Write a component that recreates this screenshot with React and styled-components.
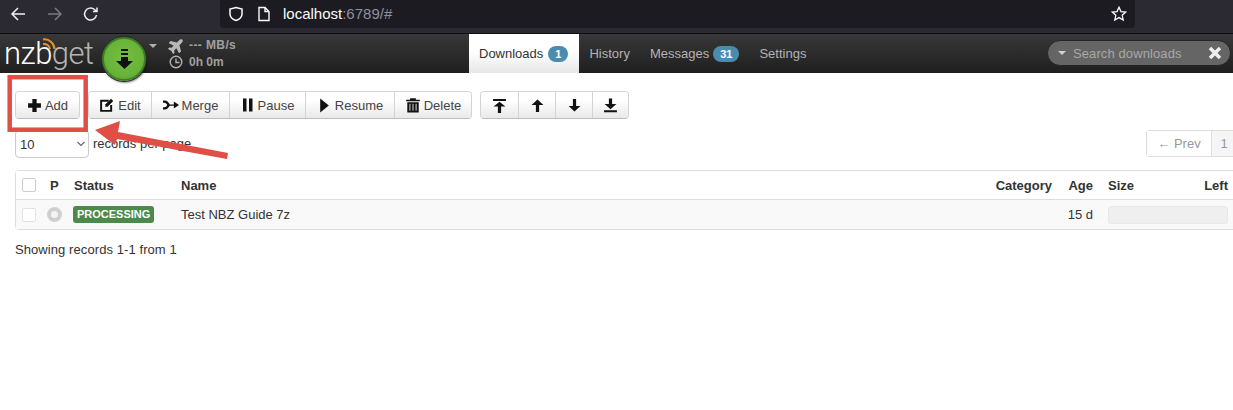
import React from "react";
import styled, { createGlobalStyle } from "styled-components";
import { FaPlane } from "react-icons/fa";

const GlobalStyle = createGlobalStyle`
  html, body { margin: 0; padding: 0; background: #fff; overflow: hidden; }
  body { font-family: "Liberation Sans", Arial, sans-serif; font-size: 13px; color: #333; }
`;

const Page = styled.div`
  position: relative;
  width: 1233px;
  height: 410px;
  overflow: hidden;
`;

/* browser chrome */
const BrowserBar = styled.div`
  height: 33px;
  background: #2b2a33;
  border-bottom: 1px solid #0c0c0d;
  display: flex;
  color: #f0f0f4;
`;
const NavButtons = styled.div`
  width: 220px;
  display: flex;
  align-items: flex-start;
  padding: 6px 0 0 10px;
  gap: 18px;
  box-sizing: border-box;
`;
const UrlBar = styled.div`
  width: 915px;
  height: 28px;
  background: #1c1b22;
  border-radius: 0 0 4px 4px;
  display: flex;
  align-items: center;
  padding: 0 8px 1px 8px;
  box-sizing: border-box;
  font-size: 15px;
`;
const UrlHost = styled.span`
  color: #fbfbfe;
  margin-left: 12px;
`;
const UrlRest = styled.span`
  color: #8f8f9d;
`;
const UrlSpacer = styled.div`
  flex: 1;
`;

/* app navbar */
const Navbar = styled.div`
  height: 39px;
  background: linear-gradient(#383838, #1f1f1f);
  display: flex;
  position: relative;
`;
const Logo = styled.div`
  position: relative;
  width: 98px;
  flex: none;
  padding-left: 4px;
  box-sizing: border-box;
  font-family: Roboto, "Liberation Sans", sans-serif;
  font-weight: 300;
  font-size: 31px;
  line-height: 39px;
  letter-spacing: -0.5px;
  color: #fff;
  white-space: nowrap;
`;
const LogoGrey = styled.span`
  color: #b4b4b4;
`;
const LogoWaves = styled.svg`
  position: absolute;
  left: 41px;
  top: 3px;
`;
const PlayButton = styled.div`
  position: relative;
  z-index: 3;
  width: 44px;
  height: 44px;
  margin: 3px 0 0 4px;
  border-radius: 50%;
  flex: none;
  background: radial-gradient(circle at 50% 45%, #74bd42 0%, #68b438 62%, #4f9a2a 100%);
  border: 2px solid #3d7d26;
  box-shadow: 0 0 0 1px #2b2b2b, 1px 2px 2px rgba(0, 0, 0, 0.45);
  box-sizing: border-box;
  display: flex;
  align-items: center;
  justify-content: center;
`;
const Caret = styled.div`
  width: 0;
  height: 0;
  margin: 10px 0 0 3px;
  border-left: 4px solid transparent;
  border-right: 4px solid transparent;
  border-top: 4px solid #b0b0b0;
  flex: none;
`;
const StatusBox = styled.div`
  margin-left: 11px;
  width: 301px;
  padding-top: 4px;
  display: flex;
  flex-direction: column;
  gap: 3px;
  font-size: 12px;
  font-weight: bold;
  color: #a0a0a0;
  flex: none;
`;
const StatusRow = styled.div`
  display: flex;
  align-items: center;
  gap: 4px;
  height: 14px;
  letter-spacing: ${(props) => props.$spread || 0}px;
`;
const PlaneIcon = styled(FaPlane)`
  width: 17px;
  height: 15px;
  color: #b8b8b8;
  transform: rotate(-45deg);
`;
const Tabs = styled.div`
  display: flex;
  align-items: stretch;
  font-size: 13px;
  flex: 1;
`;
const Tab = styled.div`
  display: flex;
  align-items: center;
  gap: ${(props) => (props.$active ? 5 : 4)}px;
  padding: 0 ${(props) => (props.$active ? 11 : 10)}px 0 10px;
  color: ${(props) => (props.$active ? "#333" : "#b3b3b3")};
  background: ${(props) =>
    props.$active ? "linear-gradient(#fff, #fff 45%, #e6e6e6)" : "none"};
`;
const Badge = styled.span`
  background: #4a8cb0;
  color: #fff;
  font-size: 11px;
  font-weight: bold;
  border-radius: 9px;
  padding: 2px 7px;
  line-height: 12px;
`;
const Search = styled.div`
  position: absolute;
  right: 2px;
  top: 6px;
  width: 184px;
  height: 26px;
  box-sizing: border-box;
  border-radius: 13px;
  background: #656565;
  border: 1px solid #252525;
  display: flex;
  align-items: center;
  padding: 0 8px 0 10px;
  color: #a8a8a8;
  font-size: 13px;
  letter-spacing: 0.1px;
`;
const SearchCaret = styled.div`
  width: 0;
  height: 0;
  margin-right: 7px;
  border-left: 4px solid transparent;
  border-right: 4px solid transparent;
  border-top: 4px solid #d0d0d0;
`;
const SearchClear = styled.span`
  margin-left: auto;
  display: flex;
`;

/* main content */
const Content = styled.div`
  padding: 18px 0 0 15px;
`;
const Toolbar = styled.div`
  display: flex;
  height: 28px;
  gap: 8px;
`;
const BtnGroup = styled.div`
  display: flex;
  border: 1px solid #d4d4d4;
  border-bottom-color: #bdbdbd;
  border-radius: 4px;
  overflow: hidden;
  box-sizing: border-box;
`;
const Btn = styled.div`
  display: flex;
  align-items: center;
  justify-content: center;
  gap: 3px;
  width: ${(props) => props.$w}px;
  box-sizing: border-box;
  background: linear-gradient(#fff, #fff 30%, #e9e9e9);
  color: #444;
  font-size: 13px;
  & + & {
    border-left: 1px solid #d4d4d4;
  }
`;
const ListControls = styled.div`
  display: flex;
  margin-top: 11px;
  height: 28px;
  align-items: flex-start;
`;
const PageSelect = styled.div`
  width: 74px;
  height: 28px;
  box-sizing: border-box;
  border: 1px solid #ccc;
  border-radius: 4px;
  display: flex;
  align-items: center;
  justify-content: space-between;
  padding: 0 3px 0 4px;
  font-size: 13px;
`;
const PerPage = styled.span`
  margin: 6px 0 0 4px;
  font-size: 13px;
`;
const Pager = styled.div`
  margin: 0 -3px 0 auto;
  display: flex;
  height: 27px;
  border: 1px solid #ddd;
  border-right: none;
  border-radius: 4px 0 0 4px;
  box-sizing: border-box;
  color: #999;
  font-size: 13px;
`;
const PagerItem = styled.div`
  display: flex;
  align-items: center;
  justify-content: center;
  width: ${(props) => props.$w}px;
  background: ${(props) => (props.$current ? "#f5f5f5" : "#fff")};
  border-left: ${(props) => (props.$current ? "1px solid #ddd" : "none")};
`;
const Table = styled.div`
  margin: 12px -6px 0 0;
  border: 1px solid #ddd;
  border-radius: 4px 0 0 4px;
  font-size: 13px;
`;
const Row = styled.div`
  display: grid;
  grid-template-columns: 34px 24px 107px 1fr 72px 41px 135px;
  align-items: center;
  height: ${(props) => props.$h}px;
  padding-right: 10px;
  background: ${(props) => (props.$odd ? "#f9f9f9" : "#fff")};
  border-top: ${(props) => (props.$odd ? "1px solid #ddd" : "none")};
  font-weight: ${(props) => (props.$head ? "bold" : "normal")};
`;
const Check = styled.div`
  width: 14px;
  height: 14px;
  margin-left: 6px;
  box-sizing: border-box;
  border: 1px solid ${(props) => (props.$dim ? "#e2e2e2" : "#ccc")};
  border-radius: 2px;
  background: #fff;
`;
const PriorityDot = styled.div`
  width: 15px;
  height: 15px;
  margin-left: -3px;
  box-sizing: border-box;
  border: 4px solid #cfcfcf;
  border-radius: 50%;
  background: #f4f4f4;
`;
const StatusLabel = styled.span`
  display: inline-block;
  margin-left: -1px;
  background: #4b8a4a;
  color: #fff;
  font-size: 11px;
  font-weight: bold;
  line-height: 12px;
  padding: 2px 4px 3px;
  border-radius: 3px;
`;
const RightCell = styled.div`
  text-align: right;
`;
const SizeHead = styled.div`
  display: flex;
  justify-content: space-between;
  padding-left: 15px;
`;
const ProgressCell = styled.div`
  padding-left: 15px;
`;
const Progress = styled.div`
  height: 18px;
  border-radius: 3px;
  background: #efefef;
  border: 1px solid #e9e9e9;
  box-sizing: border-box;
`;
const Footer = styled.div`
  margin-top: 12px;
  font-size: 13px;
  letter-spacing: 0.08px;
`;
const Annotation = styled.svg`
  position: absolute;
  left: 0;
  top: 0;
  pointer-events: none;
`;

const ChromeIcon = ({ d, opacity = 1 }) => (
  <svg width="18" height="18" viewBox="0 0 18 18" fill="none" stroke="#f0f0f4" strokeWidth="1.5" opacity={opacity}>
    <path d={d} />
  </svg>
);

const Glyph = ({ children, size = 14 }) => (
  <svg width={size} height={size} viewBox="0 0 14 14" fill="#111" style={{ flex: "none" }}>
    {children}
  </svg>
);

const App = () => {
  return (
    <Page>
      <GlobalStyle />
      <BrowserBar>
        <NavButtons>
          <ChromeIcon d="M15 8H2M8 2L2 8l6 6" />
          <ChromeIcon d="M2 8h13M9 2l6 6-6 6" opacity={0.4} />
          <ChromeIcon d="M14.5 9a6 6 0 1 1-2-5.5L15 5.5M15 1.5v4h-4" />
        </NavButtons>
        <UrlBar>
          <svg width="16" height="16" viewBox="0 0 16 16" fill="none" stroke="#fbfbfe" strokeWidth="1.5">
            <path d="M8 1.5l6 1.5v5c0 3.500-3 5.500-6 6.500-3-1-6-3-6-6.500V3z" />
          </svg>
          <svg width="14" height="16" viewBox="0 0 14 16" fill="none" stroke="#fbfbfe" strokeWidth="1.4" style={{ marginLeft: 13 }}>
            <path d="M2 1.500h6l4 4v9H2zM8 1.500v4h4" />
          </svg>
          <UrlHost>localhost</UrlHost>
          <UrlRest>:6789/#</UrlRest>
          <UrlSpacer />
          <svg width="16" height="16" viewBox="0 0 16 16" fill="none" stroke="#fbfbfe" strokeWidth="1.3">
            <path d="M8 1.200l2 4.400 4.700.5-3.500 3.200 1 4.700L8 11.600 3.800 14l1-4.700L1.300 6.100 6 5.600z" />
          </svg>
        </UrlBar>
      </BrowserBar>

      <Navbar>
        <Logo>
          nzb<LogoGrey>get</LogoGrey>
          <LogoWaves width="16" height="14" viewBox="0 0 16 14" fill="none" stroke="#e8922e" strokeWidth="2">
            <path d="M2 7a6 6 0 0 1 7 5M2 2.500a10 10 0 0 1 11.500 9.500" />
          </LogoWaves>
        </Logo>
        <PlayButton>
          <svg width="17" height="22" viewBox="0 0 17 22" fill="#111">
            <rect x="5" y="1" width="7" height="2" />
            <rect x="5" y="5" width="7" height="2" />
            <path d="M5 9h7v4h5l-8.500 8L0 13h5z" />
          </svg>
        </PlayButton>
        <Caret />
        <StatusBox>
          <StatusRow $spread={0.4}>
            <PlaneIcon />
            <span>--- MB/s</span>
          </StatusRow>
          <StatusRow>
            <svg width="14" height="14" viewBox="0 0 14 14" fill="none" stroke="#b0b0b0" strokeWidth="1.4" style={{ margin: "0 2px 0 1px" }}>
              <circle cx="7" cy="7" r="5.800" />
              <path d="M7 3.500V7.500H10.500" />
            </svg>
            <span>0h 0m</span>
          </StatusRow>
        </StatusBox>
        <Tabs>
          <Tab $active>
            Downloads <Badge>1</Badge>
          </Tab>
          <Tab>History</Tab>
          <Tab>
            Messages <Badge>31</Badge>
          </Tab>
          <Tab>Settings</Tab>
        </Tabs>
        <Search>
          <SearchCaret />
          Search downloads
          <SearchClear>
            <svg width="14" height="14" viewBox="0 0 14 14" stroke="#eee" strokeWidth="3.500">
              <path d="M2 2l10 10M12 2L2 12" />
            </svg>
          </SearchClear>
        </Search>
      </Navbar>

      <Content>
        <Toolbar>
          <BtnGroup>
            <Btn $w={63}>
              <Glyph size={15}>
                <path d="M5 1h4v4h4v4H9v4H5V9H1V5h4z" />
              </Glyph>
              Add
            </Btn>
          </BtnGroup>
          <BtnGroup>
            <Btn $w={62}>
              <Glyph size={16}>
                <path d="M1 2.500h7.500v1.700H2.700v7.100h7.100V7h1.700v6H1z" />
                <path d="M5.500 6.500L10.500 1.500l2 2-5 5H5.500z" />
              </Glyph>
              Edit
            </Btn>
            <Btn $w={78}>
              <Glyph size={16}>
                <path d="M0 3h1.800c1.500 0 2.500 1 3.500 2.500l.7 1h3.500V4l4.500 3-4.500 3V7.600H6l-.7 1C4.300 10 3.300 11 1.800 11H0V9h1.500c.8 0 1.500-.8 2.200-2-.7-1.200-1.400-2-2.200-2H0z" />
              </Glyph>
              Merge
            </Btn>
            <Btn $w={76}>
              <Glyph size={14}>
                <rect x="2" y="0.500" width="3.500" height="13" />
                <rect x="8" y="0.500" width="3.500" height="13" />
              </Glyph>
              Pause
            </Btn>
            <Btn $w={89}>
              <Glyph size={15}>
                <path d="M3 0.500l8 6.500-8 6.500z" />
              </Glyph>
              Resume
            </Btn>
            <Btn $w={77}>
              <Glyph size={16}>
                <path d="M1 2.500h3.500V1h5v1.500H13v1.300H1zM2 4.500h10V13.500H2z" />
                <path d="M4.300 6v6M7 6v6M9.700 6v6" stroke="#eee" strokeWidth="0.8" />
              </Glyph>
              Delete
            </Btn>
          </BtnGroup>
          <BtnGroup>
            <Btn $w={37}>
              <Glyph size={15}>
                <path d="M1 1h12v1.800H1zM7 3.500l5.500 4.500H8.500v6h-3V8H1.500z" />
              </Glyph>
            </Btn>
            <Btn $w={37}>
              <Glyph size={15}>
                <path d="M7 1.500l5.500 5H8.500v6.500h-3V6.500H1.500z" />
              </Glyph>
            </Btn>
            <Btn $w={37}>
              <Glyph size={15}>
                <path d="M5.500 1h3v6.500h4L7 12.500 1.500 7.500h4z" />
              </Glyph>
            </Btn>
            <Btn $w={36}>
              <Glyph size={15}>
                <path d="M5.500 0.500h3V5.500h4L7 10.500 1.500 5.500h4zM1 11.500h12v1.800H1z" />
              </Glyph>
            </Btn>
          </BtnGroup>
        </Toolbar>

        <ListControls>
          <PageSelect>
            10
            <svg width="8" height="6" viewBox="0 0 8 6" fill="none" stroke="#666" strokeWidth="1.1">
              <path d="M0.500 1l3.500 3.500L7.500 1" />
            </svg>
          </PageSelect>
          <PerPage>records per page</PerPage>
          <Pager>
            <PagerItem $w={64}>← Prev</PagerItem>
            <PagerItem $w={24} $current>
              1
            </PagerItem>
          </Pager>
        </ListControls>

        <Table>
          <Row $h={28} $head>
            <Check />
            <div>P</div>
            <div>Status</div>
            <div>Name</div>
            <RightCell>Category</RightCell>
            <RightCell>Age</RightCell>
            <SizeHead>
              <span>Size</span>
              <span>Left</span>
            </SizeHead>
          </Row>
          <Row $h={29} $odd>
            <Check $dim />
            <PriorityDot />
            <div>
              <StatusLabel>PROCESSING</StatusLabel>
            </div>
            <div>Test NBZ Guide 7z</div>
            <div />
            <RightCell>15 d</RightCell>
            <ProgressCell>
              <Progress />
            </ProgressCell>
          </Row>
        </Table>
        <Footer>Showing records 1-1 from 1</Footer>
      </Content>

      <Annotation width="1233" height="410" viewBox="0 0 1233 410" fill="none">
        <rect x="9.700" y="77.200" width="76" height="52.500" stroke="#df4f45" strokeWidth="4.500" />
        <path d="M95 130L120 121L118 132L228 153L227 159L117 139L115 145Z" fill="#df4f45" />
      </Annotation>
    </Page>
  );
};

export default App;
